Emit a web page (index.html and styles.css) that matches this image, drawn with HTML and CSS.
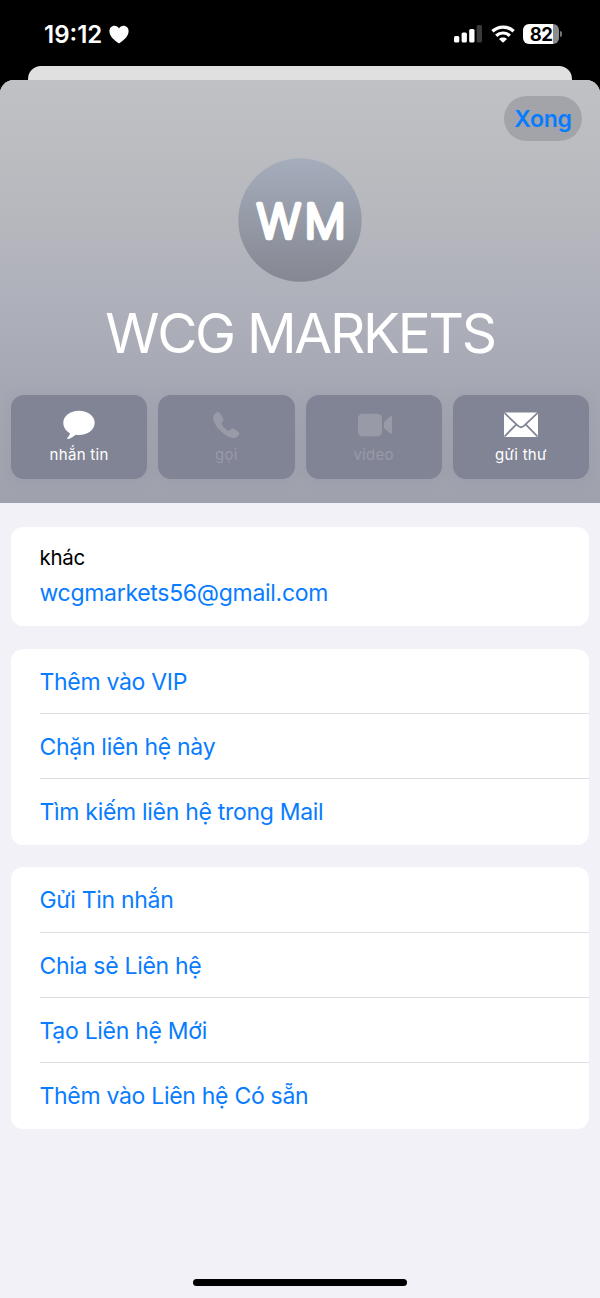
FILE: index.html
```html
<!DOCTYPE html>
<html lang="vi">
<head>
  <meta charset="UTF-8">
  <meta name="viewport" content="width=device-width, initial-scale=1.0">
  <title>WCG MARKETS</title>
  <link rel="stylesheet" href="styles.css">
</head>
<body>
  <div class="status-bar">
    <div class="clock">
      <span class="time">19:12</span>
      <svg class="heart" width="20" height="19" viewBox="0 0 20 19"><path d="M10 18.5C7.8 17 .4 12.3.4 6.2.4 3 2.6.7 5.4.7 7.4.7 9.1 1.7 10 3.4 10.9 1.7 12.6.7 14.6.7 17.4.7 19.6 3 19.6 6.2 19.6 12.3 12.2 17 10 18.5Z" fill="#fff"/></svg>
    </div>
    <div class="indicators">
      <svg class="signal" width="28" height="18" viewBox="0 0 28 18">
        <rect x="0" y="11" width="5.3" height="6.5" rx="1.5" fill="#fff"/>
        <rect x="7.6" y="7.5" width="5.3" height="10" rx="1.5" fill="#fff"/>
        <rect x="15.2" y="4" width="5.3" height="13.5" rx="1.5" fill="#fff"/>
        <rect x="22.7" y="0" width="5.3" height="17.5" rx="1.5" fill="#3a3a3a"/>
      </svg>
      <svg class="wifi" width="24" height="18" viewBox="0 0 24 18">
        <path d="M1.4 6.3C7.5.6 16.5.6 22.6 6.3" fill="none" stroke="#fff" stroke-width="3.3"/>
        <path d="M5.2 10.7C9.1 7.1 14.9 7.1 18.8 10.7" fill="none" stroke="#fff" stroke-width="3.2"/>
        <path d="M12 17.8 8 13.9C10.3 12 13.7 12 16 13.9Z" fill="#fff"/>
      </svg>
      <div class="battery">82</div>
    </div>
  </div>

  <div class="back-card"></div>

  <main class="sheet">
    <header class="header">
      <button class="done">Xong</button>
      <svg class="avatar" width="124" height="124" viewBox="0 0 124 124">
        <defs>
          <linearGradient id="avatarFill" x1="0" y1="0" x2="0" y2="1">
            <stop offset="0" stop-color="#a5adbc"/>
            <stop offset="1" stop-color="#858791"/>
          </linearGradient>
        </defs>
        <circle cx="62" cy="62" r="61.7" fill="url(#avatarFill)"/>
        <text class="initials" x="19 66.5" y="80.3">WM</text>
      </svg>
      <h1 class="name">WCG MARKETS</h1>
      <div class="actions">
        <button class="action">
          <svg width="34" height="30" viewBox="0 0 34 30"><path d="M17 .8C25.8.8 32.7 6 32.7 12.8S25.8 25.1 17 25.1C15.8 25.1 14.7 25 13.6 24.8 11.2 27.1 8.5 28.7 6 29.1 5.1 29.2 4.8 28.4 5.4 27.8 6.9 26.4 7.7 24.9 7.9 23.3 3.9 21.1 1.3 17.3 1.3 12.8 1.3 6 8.2.8 17 .8Z" fill="currentColor"/></svg>
          <span>nhắn tin</span>
        </button>
        <button class="action disabled">
          <svg class="phone" width="34" height="30" viewBox="0 0 34 30"><path d="M7.6 2.4 5.7 4C2.6 7 4.2 13.2 10.2 19.5 16.3 25.9 22.5 29.3 26.5 27.7 28 27.1 29.6 25.3 30.1 24.2 30.6 23.1 30.1 22.3 29.1 21.5L24.9 18.7C23.8 18 22.7 18.3 21.8 19.2L20.5 20.5C19.9 21 19.3 20.9 18.7 20.5 16.3 18.9 14 16.5 12.6 14.2 12.2 13.6 12.2 13 12.7 12.5L13.9 11.3C14.7 10.4 14.9 9.4 14.2 8.3L11.1 3.3C10.2 2 9 1.4 7.6 2.4Z" fill="currentColor"/></svg>
          <span>gọi</span>
        </button>
        <button class="action disabled">
          <svg class="video" width="34" height="30" viewBox="0 0 34 30"><rect x="0" y="3.8" width="24" height="22.5" rx="4.5" fill="currentColor"/><path d="M26 12.2 31.9 6.8C33 5.9 34 6.3 34 7.5V22.6C34 23.8 33 24.2 31.9 23.3L26 18Z" fill="currentColor"/></svg>
          <span>video</span>
        </button>
        <button class="action">
          <svg width="34" height="30" viewBox="0 0 34 30">
            <path d="M1.6 2.6H32.4Q34 2.6 34 4.2V25.5Q34 27 32.4 27H1.6Q0 27 0 25.5V4.2Q0 2.6 1.6 2.6Z" fill="currentColor"/>
            <path d="M.6 3.2 13.8 15.7Q17 18.7 20.2 15.7L33.4 3.2M.6 26.4 12.3 14.4M33.4 26.4 21.7 14.4" fill="none" stroke="#818494" stroke-width="1.8"/>
          </svg>
          <span>gửi thư</span>
        </button>
      </div>
    </header>

    <div class="content">
      <section class="card email">
        <span class="label">khác</span>
        <a class="address">wcgmarkets56@gmail.com</a>
      </section>

      <section class="card">
        <a class="row">Thêm vào VIP</a>
        <a class="row">Chặn liên hệ này</a>
        <a class="row">Tìm kiếm liên hệ trong Mail</a>
      </section>

      <section class="card">
        <a class="row">Gửi Tin nhắn</a>
        <a class="row">Chia sẻ Liên hệ</a>
        <a class="row">Tạo Liên hệ Mới</a>
        <a class="row">Thêm vào Liên hệ Có sẵn</a>
      </section>
    </div>

    <div class="home-indicator"></div>
  </main>
</body>
</html>
```

FILE: styles.css
```css
:root {
  --blue: #087cff;
  --bg: #f2f1f7;
  --line: #dedee1;
}
* {
  box-sizing: border-box;
}
body {
  margin: 0;
  width: 600px;
  height: 1298px;
  display: flex;
  flex-direction: column;
  overflow: hidden;
  background: #000;
  font-family: Inter, "Liberation Sans", sans-serif;
}
button {
  border: none;
  padding: 0;
  font-family: inherit;
}

/* status bar */
.status-bar {
  height: 66px;
  flex: none;
  display: flex;
  justify-content: space-between;
  align-items: flex-start;
  padding: 24px 38px 0 44px;
  color: #fff;
}
.clock {
  display: flex;
  gap: 7px;
  height: 20px;
  align-items: center;
}
.time {
  font-size: 24px;
  font-weight: 600;
  letter-spacing: 0;
}
.indicators {
  display: flex;
  align-items: center;
  height: 20px;
}
.wifi {
  margin: 0 8px 0 9px;
}
.battery {
  position: relative;
  width: 36px;
  height: 20px;
  margin-right: 3px;
  border-radius: 6px;
  background: linear-gradient(90deg, #fff 82%, #8c8c8c 82%);
  color: #000;
  font-size: 18.5px;
  font-weight: 700;
  line-height: 20px;
  letter-spacing: -0.5px;
  text-align: center;
}
.battery::after {
  content: "";
  position: absolute;
  right: -3px;
  top: 7px;
  width: 2px;
  height: 6px;
  border-radius: 0 3px 3px 0;
  background: #777;
}

/* sheet */
.back-card {
  height: 14px;
  flex: none;
  margin: 0 28px;
  border-radius: 13px 13px 0 0;
  background: #e0e0e0;
}
.sheet {
  flex: 1;
  display: flex;
  flex-direction: column;
  border-radius: 14px 14px 0 0;
  overflow: hidden;
  background: var(--bg);
}
.header {
  height: 423px;
  flex: none;
  display: flex;
  flex-direction: column;
  align-items: center;
  padding: 16px 11px 0;
  background: linear-gradient(#c0c1c5 0%, #b8b9be 29%, #afb1bb 50%, #a5a7b3 73%, #9fa1ad 100%);
}
.done {
  align-self: flex-end;
  width: 78px;
  height: 45px;
  margin-right: 7px;
  padding-top: 1px;
  border-radius: 23px;
  background: #a3a4a9;
  color: var(--blue);
  font-size: 23px;
  font-weight: 600;
  letter-spacing: -0.2px;
}
.avatar {
  display: block;
  margin-top: 17px;
}
.initials {
  font-size: 46px;
  font-weight: 200;
  fill: #fff;
  stroke: #fff;
  stroke-width: 4.6px;
  stroke-linejoin: round;
}
.name {
  margin: 17px 0 0;
  color: #fff;
  font-size: 55px;
  font-weight: 400;
  line-height: 68px;
  letter-spacing: -2.3px;
  white-space: nowrap;
}
.actions {
  width: 100%;
  display: grid;
  grid-template-columns: repeat(4, 1fr);
  gap: 11px;
  margin-top: 28px;
}
.action {
  height: 84px;
  display: flex;
  flex-direction: column;
  align-items: center;
  padding-top: 15px;
  border-radius: 13px;
  background: #818494;
  box-shadow: 0 0 12px rgba(129, 132, 148, 0.18);
  color: #fff;
  font-size: 15px;
  line-height: 20px;
  letter-spacing: 0.3px;
}
.action span {
  margin-top: 5px;
}
.disabled {
  color: #989aa8;
}
.video {
  margin-left: 3px;
}

/* contact cards */
.content {
  flex: 1;
  display: flex;
  flex-direction: column;
  gap: 22.4px;
  padding: 24.2px 11px 0;
}
.card {
  display: flex;
  flex-direction: column;
  padding-left: 28.5px;
  border-radius: 12px;
  background: #fff;
  color: var(--blue);
  font-size: 23px;
  letter-spacing: -0.3px;
}
.email {
  height: 99px;
  padding-top: 16px;
}
.label {
  color: #000;
  font-size: 20.5px;
  line-height: 30px;
}
.address {
  line-height: 41px;
}
.row {
  height: 65.4px;
  line-height: 67px;
  border-bottom: 1px solid var(--line);
}
.row:last-child {
  border-bottom: none;
}
.home-indicator {
  width: 214px;
  height: 7px;
  margin: 0 auto 12px;
  border-radius: 4px;
  background: #000;
}
```
